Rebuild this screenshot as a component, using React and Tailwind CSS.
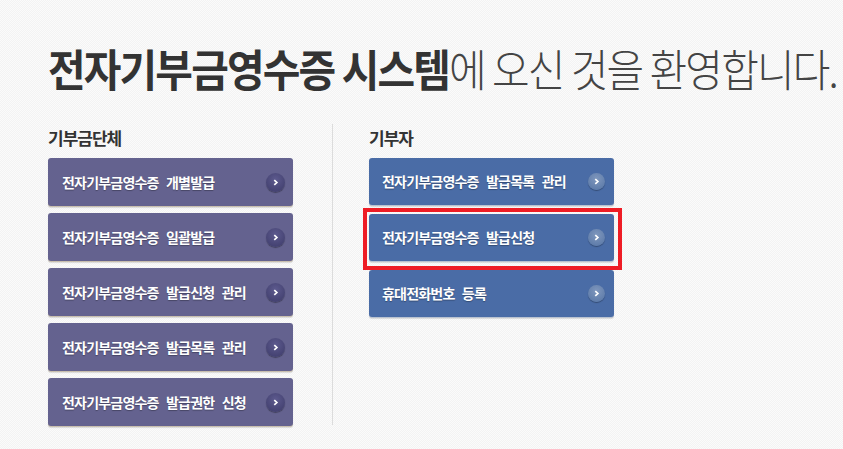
import React from 'react';

const font = { fontFamily: '"Noto Sans CJK KR", "Noto Sans", sans-serif' };

const orgItems = [
  '전자기부금영수증 개별발급',
  '전자기부금영수증 일괄발급',
  '전자기부금영수증 발급신청 관리',
  '전자기부금영수증 발급목록 관리',
  '전자기부금영수증 발급권한 신청',
];

const donorItems = [
  { label: '전자기부금영수증 발급목록 관리' },
  { label: '전자기부금영수증 발급신청', marked: true },
  { label: '휴대전화번호 등록' },
];

const Arrow = ({ tone }) => (
  <span
    className={
      tone === 'org'
        ? 'flex h-[19px] w-[19px] shrink-0 items-center justify-center rounded-full bg-[radial-gradient(circle_at_50%_35%,#5d5a8e,#3c3a68)] shadow-[0_1px_1px_rgba(0,0,0,0.35)]'
        : 'flex h-[17px] w-[17px] shrink-0 items-center justify-center rounded-full bg-[radial-gradient(circle_at_50%_35%,#7f97bd,#5574a4)] shadow-[0_1px_1px_rgba(0,0,0,0.3)]'
    }
  >
    <svg width="7" height="7" viewBox="0 0 8 8">
      <path d="M2.6 1.2 5.6 4 2.6 6.8" fill="none" stroke="#fff" strokeWidth="1.9" />
    </svg>
  </span>
);

const MenuButton = ({ label, tone, marked }) => (
  <div className="relative">
    <div
      className={
        tone === 'org'
          ? 'flex h-[48px] items-center justify-between rounded-[3px] bg-[#64628f] pl-[14px] pr-[8px] shadow-[0_1px_0_#c9bfae,0_2px_1px_rgba(0,0,0,0.12)]'
          : 'flex h-[47px] items-center justify-between rounded-[3px] bg-[#4a6ca6] pl-[13px] pr-[9px] shadow-[0_1px_0_#b9c2d0,0_2px_1px_rgba(0,0,0,0.12)]'
      }
    >
      <span className="whitespace-nowrap text-[14px] font-bold tracking-[-0.8px] text-white [word-spacing:5px] [text-shadow:0_1px_1px_rgba(0,0,0,0.3)]">
        {label}
      </span>
      <Arrow tone={tone} />
    </div>
    {marked && (
      <div className="pointer-events-none absolute -top-[6px] -right-[8px] -bottom-[9px] -left-[6px] border-[4px] border-[#ee1c25]" />
    )}
  </div>
);

export default function App() {
  return (
    <div
      style={font}
      className="h-[449px] w-[843px] overflow-hidden bg-[#f8f8f8] bg-[repeating-conic-gradient(#f3f3f3_0_25%,#fbfbfb_0_50%)] bg-size-[2px_2px] pl-[48px]"
    >
      <h1 className="origin-left scale-x-[0.93] whitespace-nowrap pt-[44px] text-[44px] leading-[48px] tracking-[-2px] text-[#333]">
        <span className="font-bold">전자기부금영수증 시스템</span>
        <span className="font-light text-[#444]">에 오신 것을 환영합니다.</span>
      </h1>

      <div className="mt-[35px] flex">
        <section className="w-[245px]">
          <h2 className="text-[17px] font-bold leading-[22px] tracking-[-1px] text-[#333]">기부금단체</h2>
          <div className="mt-[9px] flex flex-col gap-[7px]">
            {orgItems.map((item) => (
              <MenuButton key={item} label={item} tone="org" />
            ))}
          </div>
        </section>

        <div className="ml-[39px] mt-[-3px] h-[301px] w-px bg-[#dcdcdc]" />

        <section className="ml-[36px] w-[245px]">
          <h2 className="text-[17px] font-bold leading-[22px] tracking-[-1px] text-[#333]">기부자</h2>
          <div className="mt-[9px] flex flex-col gap-[9px]">
            {donorItems.map((item) => (
              <MenuButton key={item.label} label={item.label} tone="donor" marked={item.marked} />
            ))}
          </div>
        </section>
      </div>
    </div>
  );
}
